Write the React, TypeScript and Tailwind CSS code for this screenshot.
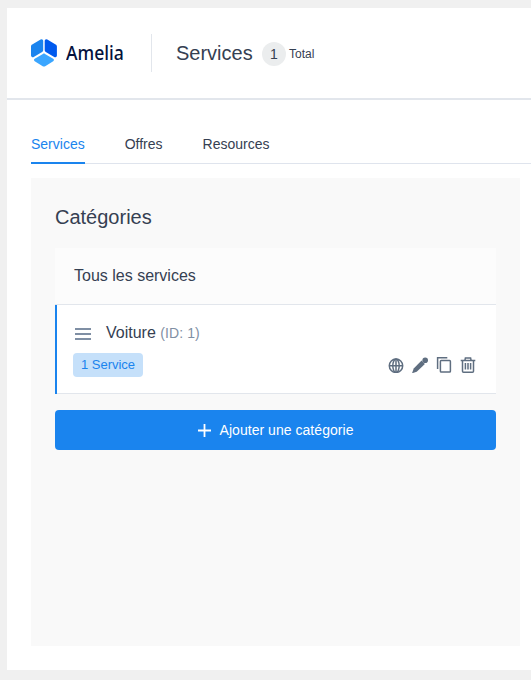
import React from "react";

function Logo() {
  return (
    <div className="flex items-center">
      <svg className="block h-7 w-[26px]" viewBox="0 0 26 28">
        <path fill="#1a84ee" d="M1.2 5.500 9.6.5a1.700 1.700 0 0 1 2.600 1.500v9.200c0 .8-.4 1.500-1.100 1.900l-8.400 4.900A1.800 1.800 0 0 1 0 16.400V7.600c0-.9.4-1.700 1.200-2.100Z" />
        <path fill="#005aee" d="M24.600 5.500 16.300.5a1.700 1.700 0 0 0-2.600 1.500v9.200c0 .8.4 1.500 1.100 1.900l8.400 4.900a1.800 1.800 0 0 0 2.700-1.600V7.600c0-.9-.5-1.700-1.300-2.100Z" />
        <path fill="#3ba6ff" d="m11.900 14.900-8.200 4.900c-1 .6-1 1.800 0 2.400l8 5c.8.500 1.700.5 2.500 0l8-5c1-.6 1-1.800 0-2.400L14 14.900c-.7-.4-1.400-.4-2.100 0Z" />
      </svg>
      <span className="ml-[9px] w-[59px] origin-left scale-x-[0.88] whitespace-nowrap font-['Noto_Sans',sans-serif] text-[20px] font-medium leading-7 text-[#04123d]">
        Amelia
      </span>
    </div>
  );
}

function Header() {
  return (
    <header className="flex h-[92px] items-center border-b-2 border-[#e2e6ec] pl-6">
      <Logo />
      <div className="ml-[26px] h-[38px] w-px bg-[#e2e6ec]" />
      <h1 className="ml-6 w-[77px] text-[20px] leading-7">Services</h1>
      <span className="ml-[9px] mt-0.5 flex size-6 items-center justify-center rounded-full bg-[#ebedee] text-[14px]">1</span>
      <span className="ml-[3px] mt-px text-[12px]">Total</span>
    </header>
  );
}

function Tabs() {
  return (
    <nav className="ml-6 flex h-8 gap-10 border-b border-[#dfe4ed] text-[14px] leading-6">
      <button className="-mb-px h-8 border-b-2 border-[#1a84ee] text-left text-[#1a84ee]">
        <span className="block h-[30px]">Services</span>
      </button>
      <button className="h-6">Offres</button>
      <button className="h-6">Resources</button>
    </nav>
  );
}

function Actions() {
  return (
    <div className="flex items-center gap-2 text-[#5f6e80]">
      <svg className="size-4" viewBox="0 0 16 16" fill="none" stroke="currentColor" strokeWidth="1.500">
        <circle cx="8" cy="8.800" r="6.700" />
        <ellipse cx="8" cy="8.800" rx="3.200" ry="6.700" />
        <path d="M8 2v13.500M1.300 8.800h13.400" />
      </svg>
      <svg className="size-4" viewBox="0 0 16 16" fill="currentColor">
        <path d="m9.600 3.600 3.300 3.300-8.200 7.900L0 16.300l1.700-4.700Z" />
        <circle cx="13.200" cy="3.300" r="2.800" />
      </svg>
      <svg className="size-4" viewBox="0 0 16 16" fill="none" stroke="currentColor" strokeWidth="1.500">
        <path d="M1.600 11.900V.8h9.700" />
        <rect x="4.400" y="3.600" width="10" height="11.500" rx=".8" />
      </svg>
      <svg className="size-4" viewBox="0 0 16 16" fill="none" stroke="currentColor" strokeWidth="1.500">
        <path d="M.7 3.400h14.600M4.900 3.400l.5-2.500h5.200l.5 2.500M2.500 3.400v10.800c0 .6.400 1 1 1h9c.6 0 1-.4 1-1V3.400M5.400 6v6.500M8 6v6.500M10.600 6v6.500" />
      </svg>
    </div>
  );
}

function Categories() {
  return (
    <section className="ml-6 mt-[14px] h-[468px] w-[489px] bg-[#f9f9f9] px-6 pt-[25px]">
      <h2 className="h-[45px] text-[20px] leading-7">Catégories</h2>
      <div className="flex h-[57px] items-center border-b border-[#e2e6ec] bg-[#fcfcfc] pl-[19px] text-[16px]">
        Tous les services
      </div>
      <div className="flex h-[89px] bg-white">
        <div className="w-0.5 bg-[#1a84ee]" />
        <div className="flex-1 border-b border-[#e2e6ec] pl-4 pr-5 pt-4">
          <div className="flex h-6 items-center">
            <span className="ml-0.5 mt-0.5 flex w-4 flex-col gap-[3px]">
              <span className="h-0.5 bg-[#7f8fa4]" />
              <span className="h-0.5 bg-[#7f8fa4]" />
              <span className="h-0.5 bg-[#7f8fa4]" />
            </span>
            <span className="ml-[15px] text-[16px]">
              Voiture <span className="text-[14px] tracking-[0.1px] text-[#7f8fa4]">(ID: 1)</span>
            </span>
          </div>
          <div className="mt-2 flex h-6 items-center justify-between">
            <span className="h-6 w-[70px] rounded bg-[#c5e0fa] text-center text-[13px] leading-6 text-[#1a84ee]">1 Service</span>
            <Actions />
          </div>
        </div>
      </div>
      <button className="mt-4 flex h-10 w-full items-center justify-center rounded bg-[#1a84ee] text-[14px] font-normal tracking-[0.04px] text-white">
        <svg className="mr-[9px] size-[13px]" viewBox="0 0 13 13" fill="none" stroke="currentColor" strokeWidth="1.800">
          <path d="M6.500 0v13M0 6.500h13" />
        </svg>
        Ajouter une catégorie
      </button>
    </section>
  );
}

export default function App() {
  return (
    <div className="h-[680px] w-[531px] overflow-hidden bg-[#f0f0f0] pl-[7px] pt-2 font-['Liberation_Sans',Arial,sans-serif] text-[#354052]">
      <main className="h-[662px] bg-white">
        <Header />
        <div className="h-8" />
        <Tabs />
        <Categories />
      </main>
    </div>
  );
}
